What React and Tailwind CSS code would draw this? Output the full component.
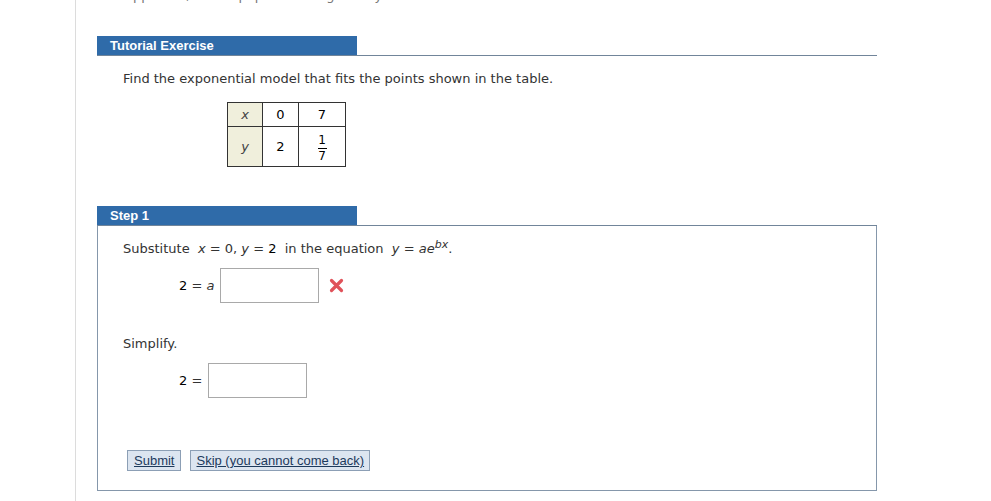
import React from "react";

const verdana = "font-['DejaVu_Sans',Verdana,sans-serif]";
const arial = "font-['Liberation_Sans',Arial,sans-serif]";

function SectionBar({ title }) {
    return (
        <div className="flex border-b border-[#71859a]">
            <div
                className={`w-[260px] h-[19px] bg-[#2f6ba9] text-white font-bold text-[13px] leading-[19px] pl-[13px] ${arial}`}
            >
                {title}
            </div>
        </div>
    );
}

function Field({ width = "w-[99px]" }) {
    return <div className={`${width} h-[35px] border border-[#a9a9a9] bg-white`} />;
}

export default function App() {
    return (
        <div className={`w-[991px] h-[501px] bg-white overflow-hidden flex text-[#333] ${verdana}`}>
            <div className="w-[75px] shrink-0" />
            <div className="w-[1px] bg-[#dcdcdc] shrink-0" />
            <div className="pl-[21px] w-[801px]">
                {/* tail end of the previous problem, cut off at the top */}
                <div className="h-[4px] overflow-hidden flex items-end">
                    <div className="text-[13px] leading-[16px] pl-[28px] text-[#777] whitespace-nowrap">
                        approach, so the population is given by the model shown above.
                    </div>
                </div>
                <div className="mt-[32px]">
                    <SectionBar title="Tutorial Exercise" />
                </div>
                <p className="text-[13px] leading-[16px] pl-[26px] mt-[15px]">
                    Find the exponential model that fits the points shown in the table.
                </p>
                <table className="ml-[130px] mt-[15px] border-collapse text-[13px] text-black">
                    <tbody>
                        <tr className="h-[24px]">
                            <td className="w-[35px] border border-[#333] bg-[#f0efdc] text-center italic text-[#444]">x</td>
                            <td className="w-[36px] border border-[#333] text-center">0</td>
                            <td className="w-[47px] border border-[#333] text-center">7</td>
                        </tr>
                        <tr className="h-[40px]">
                            <td className="border border-[#333] bg-[#f0efdc] text-center italic text-[#444]">y</td>
                            <td className="border border-[#333] text-center">2</td>
                            <td className="border border-[#333] text-center">
                                <div className="inline-flex flex-col items-center text-[12px] leading-[13px]">
                                    <span>1</span>
                                    <span className="w-[9px] border-t border-black my-[1px]" />
                                    <span>7</span>
                                </div>
                            </td>
                        </tr>
                    </tbody>
                </table>
                <div className="mt-[39px] w-[780px]">
                    <SectionBar title="Step 1" />
                    <div className="h-[265px] border border-t-0 border-[#8597ab] pl-[25px] pt-[15px] text-[13px]">
                        <p className="leading-[16px]">
                            Substitute&nbsp; <i>x</i> = 0, <i>y</i> = <span className="text-black">2</span>&nbsp; in the equation&nbsp; <i>y</i> = <i>ae</i>
                            <sup className="text-[11px]"><i>bx</i></sup>.
                        </p>
                        <div className="flex items-center mt-[11px]">
                            <span className="ml-[56px] w-[41px] text-black">
                                2 <span className="text-[#333]">=</span> <i className="text-[#333]">a</i>
                            </span>
                            <Field />
                            <span className="ml-[10px] text-[#e0525a]">
                                <svg width="15" height="15" viewBox="0 0 15 15">
                                    <path d="M2.5 2.5 L12.5 12.5 M12.5 2.5 L2.5 12.5" stroke="#e0525a" strokeWidth="3.2" strokeLinecap="round" />
                                </svg>
                            </span>
                        </div>
                        <p className="leading-[16px] mt-[33px]">Simplify.</p>
                        <div className="flex items-center mt-[11px]">
                            <span className="ml-[56px] w-[29px] text-black">
                                2 <span className="text-[#333]">=</span>
                            </span>
                            <Field />
                        </div>
                        <div className={`flex gap-[9px] mt-[52px] ml-[4px] text-[13px] ${arial}`}>
                            <button className="h-[21px] px-[6px] bg-[#dce5f0] border border-[#8c9fb5] text-[#1d3a5c] underline leading-[19px]">
                                Submit
                            </button>
                            <button className="h-[21px] px-[5px] bg-[#dce5f0] border border-[#8c9fb5] text-[#1d3a5c] underline leading-[19px]">
                                Skip (you cannot come back)
                            </button>
                        </div>
                    </div>
                </div>
            </div>
        </div>
    );
}
